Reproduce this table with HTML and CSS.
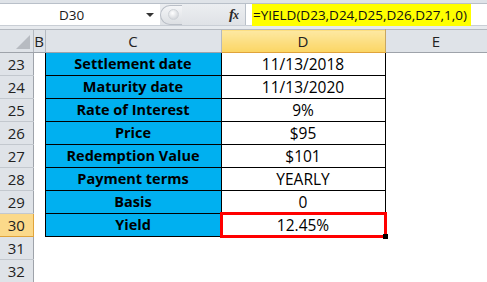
FILE: index.html
```html
<!DOCTYPE html>
<html>
<head>
<meta charset="utf-8">
<link rel="stylesheet" href="styles.css">
</head>
<body>
<div class="app">
  <div class="fbar">
    <div class="namebox"><span class="ref">D30</span><span class="caret"></span></div>
    <div class="tools">
      <span class="knob"><span class="dot"></span></span>
      <span class="fx"><i>f</i><i class="x">x</i></span>
    </div>
    <div class="formula"><span class="hl">=YIELD(D23,D24,D25,D26,D27,1,0)</span></div>
  </div>
  <div class="band"></div>
  <table class="sheet">
    <colgroup>
      <col class="ca"><col class="cb"><col class="cc"><col class="cd"><col class="ce">
    </colgroup>
    <thead>
      <tr>
        <th class="corner"><span class="tri"></span></th>
        <th class="hd">B</th>
        <th class="hd">C</th>
        <th class="hd sel">D</th>
        <th class="hd">E</th>
      </tr>
    </thead>
    <tbody>
      <tr><th class="rh">23</th><td></td><td class="lbl">Settlement date</td><td class="val">11/13/2018</td><td></td></tr>
      <tr><th class="rh">24</th><td></td><td class="lbl">Maturity date</td><td class="val">11/13/2020</td><td></td></tr>
      <tr><th class="rh">25</th><td></td><td class="lbl">Rate of Interest</td><td class="val">9%</td><td></td></tr>
      <tr><th class="rh">26</th><td></td><td class="lbl">Price</td><td class="val">$95</td><td></td></tr>
      <tr><th class="rh">27</th><td></td><td class="lbl">Redemption Value</td><td class="val">$101</td><td></td></tr>
      <tr><th class="rh">28</th><td></td><td class="lbl">Payment terms</td><td class="val">YEARLY</td><td></td></tr>
      <tr><th class="rh">29</th><td></td><td class="lbl">Basis</td><td class="val">0</td><td></td></tr>
      <tr><th class="rh rsel">30</th><td></td><td class="lbl">Yield</td><td class="val active">12.45%<span class="selbox"></span><span class="handle"></span></td><td></td></tr>
      <tr><th class="rh">31</th><td></td><td></td><td></td><td></td></tr>
      <tr><th class="rh">32</th><td></td><td></td><td></td><td></td></tr>
    </tbody>
  </table>
</div>
</body>
</html>
```

FILE: styles.css
```css
html, body {
  margin: 0;
  padding: 0;
  background: #ffffff;
}
body {
  font-family: "Open Sans", "Liberation Sans", sans-serif;
  color: #000;
  width: 487px;
  height: 282px;
  overflow: hidden;
}
.app {
  width: 487px;
}
.fbar {
  height: 26px;
  background: #dfe3e8;
  display: flex;
  align-items: stretch;
  padding-top: 3px;
  box-sizing: border-box;
  border-bottom: 1px solid #c9ced5;
}
.namebox {
  width: 160px;
  height: 22px;
  background: #fff;
  border-top: 1px solid #b9c0c9;
  box-sizing: border-box;
  display: flex;
  align-items: center;
  position: relative;
}
.ref {
  font-size: 13.5px;
  margin-left: 59px;
  color: #1a1a1a;
}
.caret {
  position: absolute;
  left: 146px;
  top: 9px;
  width: 0;
  height: 0;
  border-left: 4px solid transparent;
  border-right: 4px solid transparent;
  border-top: 4px solid #333;
}
.tools {
  width: 85px;
  height: 22px;
  display: flex;
  align-items: center;
  justify-content: space-between;
  background: linear-gradient(#eceef1, #dfe2e6);
  border-top: 1px solid #b9c0c9;
  box-sizing: border-box;
}
.knob {
  width: 22px;
  height: 20px;
  border-radius: 10px 0 0 10px;
  background: linear-gradient(#f4f5f7, #dcdfe3);
  border: 1px solid #b9bec6;
  border-right: none;
  box-sizing: border-box;
  display: flex;
  align-items: center;
  justify-content: center;
}
.dot {
  width: 9px;
  height: 9px;
  border-radius: 50%;
  background: radial-gradient(circle at 40% 35%, #ffffff, #c6cad0);
  border: 1px solid #cfd3d8;
  margin-left: 3px;
}
.fx {
  font-family: "Liberation Serif", serif;
  font-size: 15px;
  font-weight: bold;
  color: #2b2b2b;
  margin-right: 7px;
  letter-spacing: -1px;
}
.fx .x {
  font-size: 12px;
}
.formula {
  flex: 1;
  height: 22px;
  background: #fff;
  border-top: 1px solid #b9c0c9;
  border-left: 1px solid #b9c0c9;
  box-sizing: border-box;
  padding-left: 6px;
  display: flex;
  align-items: center;
}
.hl {
  background: #ffff00;
  font-size: 13.5px;
  line-height: 22px;
  height: 22px;
  padding: 0 4px 0 1px;
  color: #111;
}
.band {
  height: 3px;
  background: #e7eaee;
}
.sheet {
  border-collapse: collapse;
  table-layout: fixed;
  width: 487px;
}
.ca { width: 33px; }
.cb { width: 12px; }
.cc { width: 176px; }
.cd { width: 164px; }
.ce { width: 102px; }
.sheet th, .sheet td {
  height: 23px;
  padding: 0;
  box-sizing: border-box;
  text-align: center;
  font-size: 15px;
  line-height: 20px;
  overflow: visible;
  white-space: nowrap;
}
.sheet thead th {
  height: 23px;
  font-weight: normal;
  background: #dfe3e8;
  color: #222;
  border-top: 1px solid #b4b9c0;
  border-bottom: 1px solid #9ea3aa;
  border-right: 1px solid #b4b9c0;
}
.corner {
  position: relative;
}
.tri {
  position: absolute;
  right: 3px;
  bottom: 3px;
  width: 0;
  height: 0;
  border-left: 14px solid transparent;
  border-bottom: 14px solid #b7bbc1;
}
.sheet thead th.sel {
  background: linear-gradient(#fde9a3, #fbd563);
  border-bottom: 1px solid #e0a33a;
  border-right: 1px solid #c9a760;
  border-left: 1px solid #c9a760;
}
.sheet tbody th.rh {
  font-weight: normal;
  background: #dfe3e8;
  color: #222;
  border-bottom: 1px solid #c3c8ce;
  border-right: 1px solid #9ea3aa;
}
.sheet tbody th.rsel {
  background: #fbd98a;
  border-bottom: 1px solid #e0a33a;
  border-top: 1px solid #e0a33a;
  border-right: 1px solid #e0a33a;
}
td.lbl {
  background: #00b0f0;
  font-weight: bold;
  font-size: 14.5px;
  border: 1px solid #000;
}
td.val {
  border: 1px solid #000;
  font-size: 15.5px;
}
td.active {
  position: relative;
}
.selbox {
  position: absolute;
  left: -2px;
  top: -2px;
  right: -2px;
  bottom: -2px;
  border: 3px solid #ff0000;
}
.handle {
  position: absolute;
  right: -3px;
  bottom: -3px;
  width: 5px;
  height: 5px;
  background: #000;
}
```
